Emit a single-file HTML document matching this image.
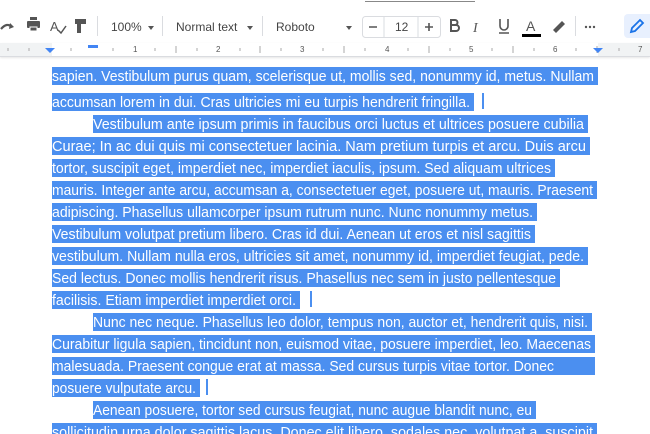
<!DOCTYPE html>
<html><head><meta charset="utf-8"><style>
body{margin:0;width:650px;height:434px;overflow:hidden;background:#fff;font-family:"Liberation Sans",sans-serif;position:relative}
.tb{position:absolute;top:0;left:0;width:650px;height:43px;background:#fff;}
.t{position:absolute;top:20px;font-size:12px;color:#444}
.sep{position:absolute;top:16px;width:1px;height:20px;background:#dadce0}
.car{position:absolute;top:26px;width:0;height:0;border-left:3.5px solid transparent;border-right:3.5px solid transparent;border-top:4px solid #555}
.ruler{position:absolute;top:43px;left:0;width:650px;height:13px;background:#f1f3f4;border-bottom:1px solid #dadce0;box-shadow:0 1px 2px rgba(0,0,0,.1)}
</style></head><body>
<div class="tb">
<div style="position:absolute;top:1px;left:365px;width:110px;height:1px;background:#888"></div>
<svg width="650" height="43" style="position:absolute;left:0;top:0">
<path d="M1 29 Q7 22 12 27" stroke="#555" stroke-width="2.2" fill="none"/><path d="M10 23 L14 27 L9 29Z" fill="#555"/>
<rect x="27" y="21" width="13" height="7" rx="1" fill="#555"/><rect x="30" y="17" width="7" height="3" fill="#555"/><rect x="30" y="27" width="7" height="4" fill="#555" stroke="#fff" stroke-width="1"/>
<text x="50" y="31" font-size="13" fill="#555" font-family="Liberation Sans">A</text><path d="M58 30 L61 33 L66 26" stroke="#555" stroke-width="1.5" fill="none"/>
<rect x="75" y="19" width="11" height="5" fill="#555"/><rect x="77" y="24" width="4" height="9" fill="#555"/>
<path d="M451 20v11h5a3 3 0 0 0 0-6h-5 4a2.5 2.5 0 0 0 0-5z" stroke="#555" stroke-width="2" fill="none"/>
<text x="473" y="32" font-size="14" fill="#555" font-style="italic" font-family="Liberation Serif">I</text>
<path d="M500 19v7a4 4 0 0 0 8 0v-7M499 33h10" stroke="#555" stroke-width="1.6" fill="none"/>
<text x="526" y="31" font-size="14" fill="#555" font-family="Liberation Sans">A</text><rect x="522" y="34" width="19" height="3" fill="#000"/>
<path d="M553 30 L562 21 L565 24 L556 33 Z" fill="#555"/>
<circle cx="586" cy="27" r="1.2" fill="#555"/><circle cx="590" cy="27" r="1.2" fill="#555"/><circle cx="594" cy="27" r="1.2" fill="#555"/>
<rect x="624" y="14" width="30" height="24" rx="4" fill="#e8f0fe"/>
<path d="M631 32 L632 28 L640 20 L643 23 L635 31 Z" stroke="#1a73e8" stroke-width="1.8" fill="none"/>
<rect x="362.5" y="16.5" width="78" height="21" rx="3" fill="none" stroke="#dadce0"/>
<line x1="384" y1="17" x2="384" y2="37" stroke="#dadce0"/><line x1="418" y1="17" x2="418" y2="37" stroke="#dadce0"/>
<path d="M369 27h8M425 27h8M429 23v8" stroke="#555" stroke-width="1.6"/>
</svg>
<div class="sep" style="left:97px"></div><div class="sep" style="left:162px"></div><div class="sep" style="left:262px"></div><div class="sep" style="left:575px"></div>
<div class="t" style="left:111px">100%</div><div class="car" style="left:148px"></div>
<div class="t" style="left:176px">Normal text</div><div class="car" style="left:247px"></div>
<div class="t" style="left:276px">Roboto</div><div class="car" style="left:346px"></div>
<div class="t" style="left:395px">12</div>
</div>
<div class="ruler">
<div style="position:absolute;left:52px;width:546px;top:0;height:13px;background:#fff"></div>
<svg width="650" height="13" style="position:absolute;left:0;top:0" font-family="Liberation Sans" font-size="8" fill="#555">
<g stroke="#aaa"><line x1="8" y1="5" x2="8" y2="8"/><line x1="29" y1="5" x2="29" y2="8"/><line x1="71" y1="5" x2="71" y2="8"/><line x1="113" y1="5" x2="113" y2="8"/><line x1="155" y1="5" x2="155" y2="8"/><line x1="176" y1="3" x2="176" y2="10"/><line x1="197" y1="5" x2="197" y2="8"/><line x1="240" y1="5" x2="240" y2="8"/><line x1="260" y1="3" x2="260" y2="10"/><line x1="281" y1="5" x2="281" y2="8"/><line x1="323" y1="5" x2="323" y2="8"/><line x1="344" y1="3" x2="344" y2="10"/><line x1="365" y1="5" x2="365" y2="8"/><line x1="408" y1="5" x2="408" y2="8"/><line x1="429" y1="3" x2="429" y2="10"/><line x1="450" y1="5" x2="450" y2="8"/><line x1="492" y1="5" x2="492" y2="8"/><line x1="513" y1="3" x2="513" y2="10"/><line x1="534" y1="5" x2="534" y2="8"/><line x1="576" y1="5" x2="576" y2="8"/><line x1="597" y1="3" x2="597" y2="10"/><line x1="619" y1="5" x2="619" y2="8"/></g>
<text x="133" y="9">1</text><text x="216" y="9">2</text><text x="300" y="9">3</text><text x="385" y="9">4</text><text x="469" y="9">5</text><text x="553" y="9">6</text><text x="638" y="9">7</text>
<rect x="88" y="2" width="10" height="3" fill="#4285f4"/>
<path d="M45 5h10l-5 5z M593 5h10l-5 5z" fill="#4285f4"/>
</svg>
</div>
<svg width="650" height="434" style="position:absolute;left:0;top:0" font-family="Liberation Sans" font-size="14.5" fill="#fff">
<g fill="#4b8ff0">
<rect x="52" y="67" width="546" height="18"/><rect x="52" y="93" width="422" height="18"/><rect x="93" y="115" width="495" height="18"/><rect x="52" y="137" width="538" height="18"/><rect x="52" y="159" width="503" height="18"/><rect x="52" y="181" width="545" height="18"/><rect x="52" y="203" width="485" height="18"/><rect x="52" y="225" width="483" height="18"/><rect x="52" y="247" width="536" height="18"/><rect x="52" y="269" width="508" height="18"/><rect x="52" y="291" width="248" height="18"/><rect x="93" y="313" width="499" height="18"/><rect x="52" y="335" width="543" height="18"/><rect x="52" y="357" width="543" height="18"/><rect x="52" y="379" width="148" height="18"/><rect x="93" y="401" width="443" height="18"/><rect x="52" y="423" width="545" height="18"/>
<rect x="482" y="93" width="2" height="16"/><rect x="310" y="291" width="2" height="16"/><rect x="206" y="379" width="2" height="16"/>
</g>
<text x="52" y="81" textLength="542" lengthAdjust="spacingAndGlyphs">sapien. Vestibulum purus quam, scelerisque ut, mollis sed, nonummy id, metus. Nullam</text>
<text x="52" y="107" textLength="418" lengthAdjust="spacingAndGlyphs">accumsan lorem in dui. Cras ultricies mi eu turpis hendrerit fringilla.</text>
<text x="93" y="129" textLength="491" lengthAdjust="spacingAndGlyphs">Vestibulum ante ipsum primis in faucibus orci luctus et ultrices posuere cubilia</text>
<text x="52" y="151" textLength="534" lengthAdjust="spacingAndGlyphs">Curae; In ac dui quis mi consectetuer lacinia. Nam pretium turpis et arcu. Duis arcu</text>
<text x="52" y="173" textLength="499" lengthAdjust="spacingAndGlyphs">tortor, suscipit eget, imperdiet nec, imperdiet iaculis, ipsum. Sed aliquam ultrices</text>
<text x="52" y="195" textLength="541" lengthAdjust="spacingAndGlyphs">mauris. Integer ante arcu, accumsan a, consectetuer eget, posuere ut, mauris. Praesent</text>
<text x="52" y="217" textLength="481" lengthAdjust="spacingAndGlyphs">adipiscing. Phasellus ullamcorper ipsum rutrum nunc. Nunc nonummy metus.</text>
<text x="52" y="239" textLength="479" lengthAdjust="spacingAndGlyphs">Vestibulum volutpat pretium libero. Cras id dui. Aenean ut eros et nisl sagittis</text>
<text x="52" y="261" textLength="532" lengthAdjust="spacingAndGlyphs">vestibulum. Nullam nulla eros, ultricies sit amet, nonummy id, imperdiet feugiat, pede.</text>
<text x="52" y="283" textLength="504" lengthAdjust="spacingAndGlyphs">Sed lectus. Donec mollis hendrerit risus. Phasellus nec sem in justo pellentesque</text>
<text x="52" y="305" textLength="244" lengthAdjust="spacingAndGlyphs">facilisis. Etiam imperdiet imperdiet orci.</text>
<text x="93" y="327" textLength="495" lengthAdjust="spacingAndGlyphs">Nunc nec neque. Phasellus leo dolor, tempus non, auctor et, hendrerit quis, nisi.</text>
<text x="52" y="349" textLength="539" lengthAdjust="spacingAndGlyphs">Curabitur ligula sapien, tincidunt non, euismod vitae, posuere imperdiet, leo. Maecenas</text>
<text x="52" y="371" textLength="502" lengthAdjust="spacingAndGlyphs">malesuada. Praesent congue erat at massa. Sed cursus turpis vitae tortor. Donec</text>
<text x="52" y="393" textLength="144" lengthAdjust="spacingAndGlyphs">posuere vulputate arcu.</text>
<text x="93" y="415" textLength="439" lengthAdjust="spacingAndGlyphs">Aenean posuere, tortor sed cursus feugiat, nunc augue blandit nunc, eu</text>
<text x="52" y="437" textLength="541" lengthAdjust="spacingAndGlyphs">sollicitudin urna dolor sagittis lacus. Donec elit libero, sodales nec, volutpat a, suscipit</text>
</svg>
</body></html>
